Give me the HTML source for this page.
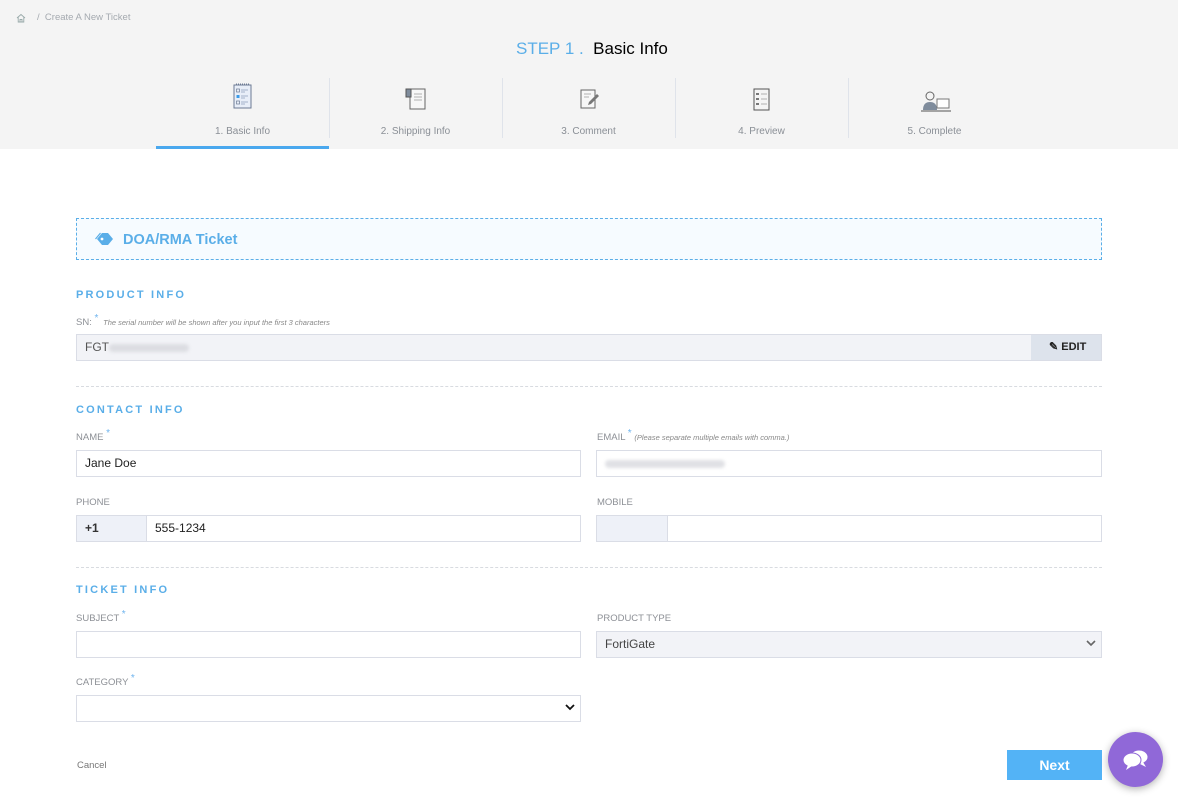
<!DOCTYPE html>
<html><head><meta charset="utf-8"><style>
*{box-sizing:border-box;margin:0;padding:0}
body{width:1178px;height:808px;background:#fff;font-family:"Liberation Sans",sans-serif;position:relative;overflow:hidden;color:#333}
.a{position:absolute}
.hdr{left:0;top:0;width:1178px;height:149px;background:#f4f4f4}
.tab{position:absolute;top:78px;width:173px;height:70px;text-align:center}
.tab .lbl{position:absolute;top:48px;left:0;width:100%;font-size:10px;color:#8a8f96}
.div{position:absolute;top:78px;width:1px;height:60px;background:#dfe3ea}
.sec{font-size:11px;font-weight:bold;color:#5aaee8;letter-spacing:2.2px}
.lab{font-size:9.5px;color:#8d9096}
.lab b{color:#6fb4ee;font-weight:normal;position:relative;top:-4px;font-size:10px}
.inp{position:absolute;height:27px;border:1px solid #dadde6;background:#fff;font-size:12px;line-height:25px;padding-left:8px;color:#222}
.dash{position:absolute;left:76px;width:1026px;border-top:1px dashed #d8dbe0}
</style></head><body>
<div class="a hdr"></div>
<svg class="a" style="left:16px;top:13px" width="10" height="10" viewBox="0 0 10 10"><path d="M1 5L5 1.5 9 5M2.2 4v5h5.6V4M4 9V6.5h2V9" fill="none" stroke="#9aa" stroke-width="0.9"/></svg>
<div class="a" style="left:37px;top:12px;font-size:9.5px;color:#a5aab0">/&nbsp;&nbsp;Create A New Ticket</div>
<div class="a" style="left:516px;top:39px;font-size:17px;color:#5aaee8">STEP 1 .&nbsp; <span style="color:#000">Basic Info</span></div>

<div class="tab" style="left:156px"><svg class="a" style="left:77px;top:5px" width="19" height="26" viewBox="0 0 19 26"><rect x="1" y="2" width="17" height="23" fill="#e8eef8" stroke="#6c7a93"/><path d="M3 1h13" stroke="#6c7a93" stroke-dasharray="1 1"/><rect x="3.5" y="6" width="3" height="3" fill="none" stroke="#6c7a93" stroke-width=".7"/><rect x="3.5" y="12" width="3" height="3" fill="#3a9be8"/><rect x="3.5" y="18" width="3" height="3" fill="none" stroke="#6c7a93" stroke-width=".7"/><path d="M8 7h7M8 9h4M8 13h7M8 15h4M8 19h7M8 21h4" stroke="#8fa0bb" stroke-width=".7"/></svg><div class="lbl">1. Basic Info</div></div>
<div class="a" style="left:156px;top:146px;width:173px;height:3px;background:#4aa8ee"></div>
<div class="div" style="left:329px"></div>
<div class="tab" style="left:329px"><svg class="a" style="left:75px;top:9px" width="24" height="24" viewBox="0 0 24 24"><rect x="6" y="2" width="15" height="20" fill="#f7f7f7" stroke="#666"/><rect x="2" y="2" width="5" height="8" fill="#7f8c9c" stroke="#555"/><path d="M10 7h8M10 10h8M10 13h8" stroke="#999" stroke-width=".8"/></svg><div class="lbl">2. Shipping Info</div></div>
<div class="div" style="left:502px"></div>
<div class="tab" style="left:502px"><svg class="a" style="left:75px;top:9px" width="24" height="24" viewBox="0 0 24 24"><rect x="4" y="3" width="14" height="18" fill="#f7f7f7" stroke="#666"/><path d="M7 7h7M7 10h5" stroke="#999" stroke-width=".8"/><path d="M12 15l8-8 2 2-8 8-3 1z" fill="#777"/></svg><div class="lbl">3. Comment</div></div>
<div class="div" style="left:675px"></div>
<div class="tab" style="left:675px"><svg class="a" style="left:78px;top:9px" width="17" height="24" viewBox="0 0 17 24"><rect x="1" y="2" width="15" height="21" fill="#f4f4f4" stroke="#555"/><path d="M3 6h3v2H3zM3 11h3v2H3zM3 16h3v2H3z" fill="#777"/><path d="M8 7h6M8 12h6M8 17h6" stroke="#999" stroke-width=".8"/></svg><div class="lbl">4. Preview</div></div>
<div class="div" style="left:848px"></div>
<div class="tab" style="left:848px"><svg class="a" style="left:70px;top:12px" width="36" height="24" viewBox="0 0 36 24"><circle cx="12" cy="6" r="4" fill="#f4f4f4" stroke="#666"/><path d="M5 20c0-6 3-8 7-8s7 2 7 8z" fill="#7f8c9c"/><rect x="19" y="9" width="12" height="9" fill="#fff" stroke="#777"/><path d="M3 21h30" stroke="#888" stroke-width="1.5"/></svg><div class="lbl">5. Complete</div></div>

<div class="a" style="left:76px;top:218px;width:1026px;height:42px;border:1px dashed #5aaee8;background:#f6fbff"></div>
<svg class="a" style="left:95px;top:232px" width="20" height="14" viewBox="0 0 20 14"><path d="M2 7l5-6h6l5 6-5 6H7z" fill="#5aaee8"/><path d="M0.5 7l5-6" stroke="#5aaee8" stroke-width="1.2"/><circle cx="7" cy="7" r="1.4" fill="#fff"/></svg>
<div class="a" style="left:123px;top:232px;font-size:14.5px;font-weight:bold;color:#5aaee8">DOA/RMA Ticket</div>

<div class="a sec" style="left:76px;top:289px">PRODUCT INFO</div>
<div class="a lab" style="left:76px;top:317px">SN: <b>*</b> <i style="font-size:7.5px;color:#888">&nbsp;The serial number will be shown after you input the first 3 characters</i></div>
<div class="inp" style="left:76px;top:334px;width:1026px;background:#f2f3f7;color:#555">FGT<span style="display:inline-block;width:80px;height:8px;background:#dcdde2;border-radius:4px;filter:blur(1.5px);vertical-align:middle"></span></div>
<div class="a" style="left:1031px;top:335px;width:70px;height:25px;background:#dde3ec;font-size:11px;font-weight:bold;color:#222;line-height:25px;padding-left:18px">✎ EDIT</div>
<div class="dash" style="top:386px"></div>

<div class="a sec" style="left:76px;top:404px">CONTACT INFO</div>
<div class="a lab" style="left:76px;top:432px">NAME <b>*</b></div>
<div class="inp" style="left:76px;top:450px;width:505px">Jane Doe</div>
<div class="a lab" style="left:597px;top:432px">EMAIL <b>*</b> <i style="font-size:7.5px;color:#888">(Please separate multiple emails with comma.)</i></div>
<div class="inp" style="left:596px;top:450px;width:506px"><span style="display:inline-block;width:120px;height:8px;background:#e0e1e5;border-radius:4px;filter:blur(1.5px);vertical-align:middle"></span></div>
<div class="a lab" style="left:76px;top:497px">PHONE</div>
<div class="inp" style="left:76px;top:515px;width:505px;padding-left:78px">555-1234</div>
<div class="a" style="left:77px;top:516px;width:70px;height:25px;background:#eef1f8;border-right:1px solid #dadde6;font-size:12px;font-weight:bold;line-height:25px;padding-left:8px">+1</div>
<div class="a lab" style="left:597px;top:497px">MOBILE</div>
<div class="inp" style="left:596px;top:515px;width:506px"></div>
<div class="a" style="left:597px;top:516px;width:71px;height:25px;background:#eef1f8;border-right:1px solid #dadde6"></div>
<div class="dash" style="top:567px"></div>

<div class="a sec" style="left:76px;top:584px">TICKET INFO</div>
<div class="a lab" style="left:76px;top:613px">SUBJECT <b>*</b></div>
<div class="inp" style="left:76px;top:631px;width:505px"></div>
<div class="a lab" style="left:597px;top:613px">PRODUCT TYPE</div>
<div class="inp" style="left:596px;top:631px;width:506px;background:#f2f3f7;color:#444">FortiGate</div>
<svg class="a" style="left:1086px;top:640px" width="10" height="7" viewBox="0 0 10 7"><path d="M1 1l4 4 4-4" fill="none" stroke="#666" stroke-width="1.6"/></svg>
<div class="a lab" style="left:76px;top:677px">CATEGORY <b>*</b></div>
<div class="inp" style="left:76px;top:695px;width:505px"></div>
<svg class="a" style="left:565px;top:704px" width="10" height="7" viewBox="0 0 10 7"><path d="M1 1l4 4 4-4" fill="none" stroke="#111" stroke-width="1.8"/></svg>

<div class="a" style="left:77px;top:760px;font-size:9.5px;color:#777">Cancel</div>
<div class="a" style="left:1007px;top:750px;width:95px;height:30px;background:#53b3f6;color:#fff;font-size:14px;font-weight:bold;text-align:center;line-height:30px">Next</div>
<div class="a" style="left:1108px;top:732px;width:55px;height:55px;border-radius:50%;background:#9068d8;box-shadow:0 2px 8px rgba(0,0,0,.3)"></div>
<svg class="a" style="left:1121px;top:747px" width="30" height="26" viewBox="0 0 30 26"><ellipse cx="18" cy="10" rx="9" ry="7" fill="#fff" stroke="#9068d8"/><path d="M22 15l3 5-6-3z" fill="#fff"/><ellipse cx="11" cy="13" rx="9" ry="7" fill="#fff" stroke="#9068d8"/><path d="M7 18l-2 5 6-4z" fill="#fff"/></svg>
</body></html>
